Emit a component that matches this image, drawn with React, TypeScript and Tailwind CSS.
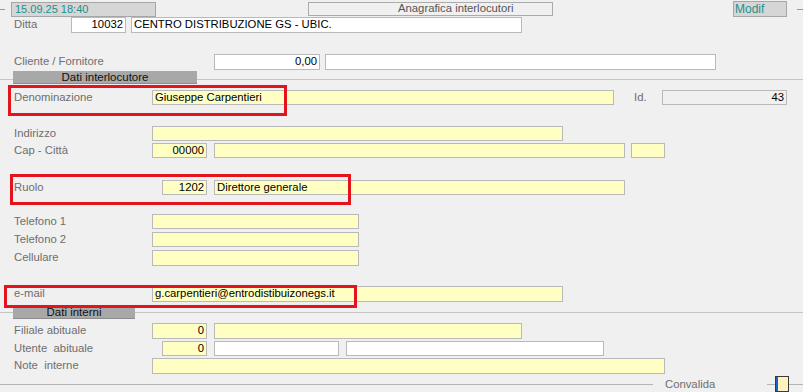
import React from "react";

type BoxProps = {
  w: string;
  children?: React.ReactNode;
  right?: boolean;
  kind?: "yellow" | "white" | "gray";
  extra?: string;
};

function Box({ w, children, right, kind = "yellow", extra = "" }: BoxProps) {
  const bg =
    kind === "yellow" ? "bg-[#ffffc4]" : kind === "white" ? "bg-white" : "bg-[#f0f0f0]";
  return (
    <div
      className={`${w} ${bg} ${extra} h-full border border-[#b9b9b9] flex items-center px-[2px] overflow-hidden whitespace-nowrap text-black leading-none ${
        right ? "justify-end" : "justify-start"
      }`}
    >
      {children}
    </div>
  );
}

function Label({ w, children }: { w: string; children: React.ReactNode }) {
  return (
    <div className={`${w} shrink-0 pl-[14px] text-[#6e6e6e] whitespace-nowrap leading-none`}>
      {children}
    </div>
  );
}

function Section({ title, tabW, lineOffset, h, mt }: { title: string; tabW: string; lineOffset: string; h: string; mt: string }) {
  return (
    <div className={`grid ${h} ${mt}`}>
      <div className={`col-start-1 row-start-1 h-px bg-[#c4c4c4] self-start ${lineOffset}`} />
      <div
        className={`col-start-1 row-start-1 ml-[13px] ${tabW} h-full bg-[#a8a8a8] border-b border-[#8c8c8c] flex items-center justify-center text-[11.5px] leading-[11px] text-[#111]`}
      >
        {title}
      </div>
    </div>
  );
}

export default function App() {
  return (
    <div className="relative w-[803px] h-[392px] overflow-hidden bg-[#f0f0f0] font-['Liberation_Sans',Arial,sans-serif] text-[11.3px] flex flex-col">
      {/* header */}
      <div className="mt-[1px] h-[16px] flex items-center">
        <div className="w-[5px] h-px bg-[#9a9a9a]" />
        <div className="ml-[6px] w-[145px] h-[15px] bg-[#d6d6d6] border border-[#a6a6a6] flex items-center pl-[3px] text-[11px] text-[#1e8f8f] leading-none">
          15.09.25 18:40
        </div>
        <div className="ml-[152px] w-[245px] h-[14px] border border-[#ababab] flex items-center pl-[89px] text-[11.3px] text-[#555] leading-none">
          Anagrafica interlocutori
        </div>
        <div className="ml-[180px] w-[54px] h-[16px] bg-[#d6d6d6] border border-[#a6a6a6] flex items-center pl-[1px] text-[12px] text-[#1e8f8f] leading-none">
          Modif
        </div>
        <div className="ml-[10px] w-[6px] h-px bg-[#9a9a9a]" />
      </div>

      {/* Ditta */}
      <div className="mt-[0px] h-[16px] flex items-center">
        <Label w="w-[71px]">Ditta</Label>
        <Box w="w-[55px]" right kind="white">10032</Box>
        <Box w="w-[391px]" kind="white" extra="ml-[5px]">CENTRO DISTRIBUZIONE GS - UBIC.</Box>
      </div>

      {/* Cliente / Fornitore */}
      <div className="mt-[21px] h-[16px] flex items-center">
        <Label w="w-[214px]">Cliente / Fornitore</Label>
        <Box w="w-[106px]" right kind="white">0,00</Box>
        <Box w="w-[391px]" kind="white" extra="ml-[5px]" />
      </div>

      <Section title="Dati interlocutore" tabW="w-[184px]" lineOffset="mt-[8px]" h="h-[13px]" mt="mt-[1px]" />

      {/* Denominazione */}
      <div className="mt-[6px] h-[15px] flex items-center">
        <Label w="w-[152px]">Denominazione</Label>
        <Box w="w-[462px]">Giuseppe Carpentieri</Box>
        <div className="ml-[20px] w-[28px] text-[#6e6e6e] leading-none">Id.</div>
        <Box w="w-[125px]" right kind="gray">43</Box>
      </div>

      {/* Indirizzo */}
      <div className="mt-[21px] h-[15px] flex items-center">
        <Label w="w-[152px]">Indirizzo</Label>
        <Box w="w-[411px]" />
      </div>

      {/* Cap - Città */}
      <div className="mt-[2px] h-[15px] flex items-center">
        <Label w="w-[152px]">Cap - Città</Label>
        <Box w="w-[55px]" right>00000</Box>
        <Box w="w-[411px]" extra="ml-[7px]" />
        <Box w="w-[34px]" extra="ml-[6px]" />
      </div>

      {/* Ruolo */}
      <div className="mt-[22px] h-[15px] flex items-center">
        <Label w="w-[162px]">Ruolo</Label>
        <Box w="w-[45px]" right>1202</Box>
        <Box w="w-[411px]" extra="ml-[7px]">Direttore generale</Box>
      </div>

      {/* Telefoni */}
      <div className="mt-[19px] h-[15px] flex items-center">
        <Label w="w-[152px]">Telefono 1</Label>
        <Box w="w-[207px]" />
      </div>
      <div className="mt-[3px] h-[15px] flex items-center">
        <Label w="w-[152px]">Telefono 2</Label>
        <Box w="w-[207px]" />
      </div>
      <div className="mt-[3px] h-[16px] flex items-center">
        <Label w="w-[152px]">Cellulare</Label>
        <Box w="w-[207px]" />
      </div>

      {/* e-mail */}
      <div className="mt-[20px] h-[16px] flex items-center">
        <Label w="w-[152px]">e-mail</Label>
        <Box w="w-[411px]">g.carpentieri@entrodistibuizonegs.it</Box>
      </div>

      <Section title="Dati interni" tabW="w-[122px]" lineOffset="mt-[5px]" h="h-[12px]" mt="mt-[5px]" />

      {/* Filiale */}
      <div className="mt-[4px] h-[16px] flex items-center">
        <Label w="w-[152px]">Filiale abituale</Label>
        <Box w="w-[55px]" right>0</Box>
        <Box w="w-[308px]" extra="ml-[7px]" />
      </div>

      {/* Utente */}
      <div className="mt-[2px] h-[15px] flex items-center">
        <Label w="w-[162px]">Utente&nbsp; abituale</Label>
        <Box w="w-[45px]" right>0</Box>
        <Box w="w-[125px]" kind="white" extra="ml-[7px]" />
        <Box w="w-[258px]" kind="white" extra="ml-[7px]" />
      </div>

      {/* Note */}
      <div className="mt-[2px] h-[16px] flex items-center">
        <Label w="w-[152px]">Note&nbsp; interne</Label>
        <Box w="w-[513px]" />
      </div>

      {/* Convalida */}
      <div className="mt-[2px] h-[16px] flex items-center">
        <div className="w-[653px] h-px bg-[#b4b4b4]" />
        <div className="ml-[12px] text-[#6e6e6e] leading-none mt-[2px]">Convalida</div>
        <div className="ml-[52px] w-[8px] h-px bg-[#b4b4b4]" />
        <div className="w-[14px] h-[16px] border border-[#3a3a3a] bg-[#fff2c0] flex">
          <div className="w-[2px] h-full bg-[#1a62c8]" />
        </div>
        <div className="flex-1 h-px bg-[#b4b4b4]" />
      </div>

      {/* red annotation boxes */}
      <div className="absolute left-[8px] top-[85px] w-[279px] h-[31px] border-[3px] border-[#e3141b]" />
      <div className="absolute left-[10px] top-[174px] w-[341px] h-[31px] border-[3px] border-[#e3141b]" />
      <div className="absolute left-[4px] top-[285px] w-[353px] h-[23px] border-[3px] border-[#e3141b]" />
    </div>
  );
}
